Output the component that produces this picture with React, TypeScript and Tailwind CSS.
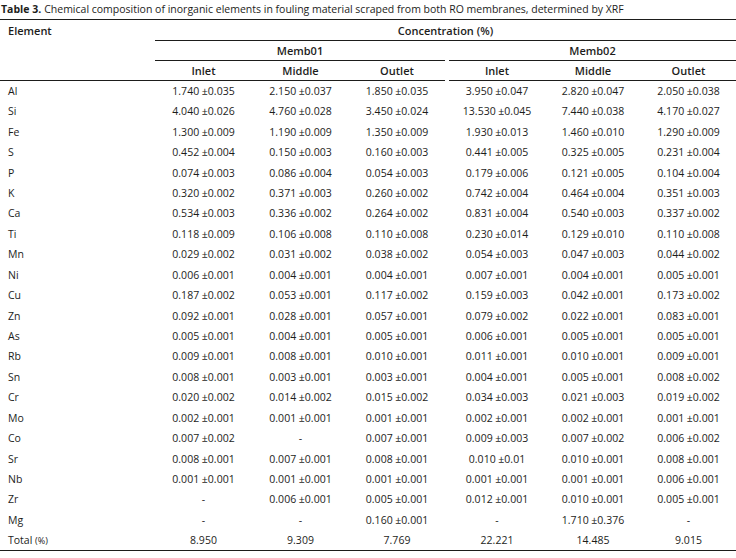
const rows: [string, string[]][] = [
  ['Al', ['1.740 ±0.035', '2.150 ±0.037', '1.850 ±0.035', '3.950 ±0.047', '2.820 ±0.047', '2.050 ±0.038']],
  ['Si', ['4.040 ±0.026', '4.760 ±0.028', '3.450 ±0.024', '13.530 ±0.045', '7.440 ±0.038', '4.170 ±0.027']],
  ['Fe', ['1.300 ±0.009', '1.190 ±0.009', '1.350 ±0.009', '1.930 ±0.013', '1.460 ±0.010', '1.290 ±0.009']],
  ['S', ['0.452 ±0.004', '0.150 ±0.003', '0.160 ±0.003', '0.441 ±0.005', '0.325 ±0.005', '0.231 ±0.004']],
  ['P', ['0.074 ±0.003', '0.086 ±0.004', '0.054 ±0.003', '0.179 ±0.006', '0.121 ±0.005', '0.104 ±0.004']],
  ['K', ['0.320 ±0.002', '0.371 ±0.003', '0.260 ±0.002', '0.742 ±0.004', '0.464 ±0.004', '0.351 ±0.003']],
  ['Ca', ['0.534 ±0.003', '0.336 ±0.002', '0.264 ±0.002', '0.831 ±0.004', '0.540 ±0.003', '0.337 ±0.002']],
  ['Ti', ['0.118 ±0.009', '0.106 ±0.008', '0.110 ±0.008', '0.230 ±0.014', '0.129 ±0.010', '0.110 ±0.008']],
  ['Mn', ['0.029 ±0.002', '0.031 ±0.002', '0.038 ±0.002', '0.054 ±0.003', '0.047 ±0.003', '0.044 ±0.002']],
  ['Ni', ['0.006 ±0.001', '0.004 ±0.001', '0.004 ±0.001', '0.007 ±0.001', '0.004 ±0.001', '0.005 ±0.001']],
  ['Cu', ['0.187 ±0.002', '0.053 ±0.001', '0.117 ±0.002', '0.159 ±0.003', '0.042 ±0.001', '0.173 ±0.002']],
  ['Zn', ['0.092 ±0.001', '0.028 ±0.001', '0.057 ±0.001', '0.079 ±0.002', '0.022 ±0.001', '0.083 ±0.001']],
  ['As', ['0.005 ±0.001', '0.004 ±0.001', '0.005 ±0.001', '0.006 ±0.001', '0.005 ±0.001', '0.005 ±0.001']],
  ['Rb', ['0.009 ±0.001', '0.008 ±0.001', '0.010 ±0.001', '0.011 ±0.001', '0.010 ±0.001', '0.009 ±0.001']],
  ['Sn', ['0.008 ±0.001', '0.003 ±0.001', '0.003 ±0.001', '0.004 ±0.001', '0.005 ±0.001', '0.008 ±0.002']],
  ['Cr', ['0.020 ±0.002', '0.014 ±0.002', '0.015 ±0.002', '0.034 ±0.003', '0.021 ±0.003', '0.019 ±0.002']],
  ['Mo', ['0.002 ±0.001', '0.001 ±0.001', '0.001 ±0.001', '0.002 ±0.001', '0.002 ±0.001', '0.001 ±0.001']],
  ['Co', ['0.007 ±0.002', '-', '0.007 ±0.001', '0.009 ±0.003', '0.007 ±0.002', '0.006 ±0.002']],
  ['Sr', ['0.008 ±0.001', '0.007 ±0.001', '0.008 ±0.001', '0.010 ±0.01', '0.010 ±0.001', '0.008 ±0.001']],
  ['Nb', ['0.001 ±0.001', '0.001 ±0.001', '0.001 ±0.001', '0.001 ±0.001', '0.001 ±0.001', '0.006 ±0.001']],
  ['Zr', ['-', '0.006 ±0.001', '0.005 ±0.001', '0.012 ±0.001', '0.010 ±0.001', '0.005 ±0.001']],
  ['Mg', ['-', '-', '0.160 ±0.001', '-', '1.710 ±0.376', '-']],
];

const totals = ['8.950', '9.309', '7.769', '22.221', '14.485', '9.015'];

// 155 label col, 3 x Memb01, 4px gap col, 3 x Memb02
const cols = 'grid grid-cols-[155px_97px_97px_96px_4px_96px_96px_95px]';

const DataRow = ({ label, values, last }: { label: React.ReactNode; values: string[]; last?: boolean }) => (
  <div className={`${cols} h-[20.43px] items-center ${last ? 'border-b border-[#1d1d1b]' : ''}`}>
    <div className="pl-[8px]">{label}</div>
    {values.slice(0, 3).map((v, i) => (
      <div key={i} className="text-center">{v}</div>
    ))}
    <div />
    {values.slice(3).map((v, i) => (
      <div key={i + 3} className="text-center">{v}</div>
    ))}
  </div>
);

export default function App() {
  return (
    <div
      className="w-[736px] h-[558px] bg-white text-[#1d1d1b] text-[10.5px] leading-none"
      style={{ fontFamily: '"Open Sans", "Noto Sans", sans-serif' }}
    >
      <div className="h-[19px] flex items-center pl-[1px] text-[10.5px]">
        <span className="font-bold mr-[3px]">Table 3.</span>
        Chemical composition of inorganic elements in fouling material scraped from both RO membranes, determined by XRF
      </div>

      <div className={`${cols} grid-rows-[21px_20px_20px] border-t border-[#1d1d1b] font-semibold text-[11px]`}>
        <div className="row-span-3 col-start-1 row-start-1 border-b border-[#1d1d1b] pl-[8px] pt-[5px]">Element</div>
        <div className="col-start-2 col-span-7 row-start-1 border-b border-[#1d1d1b] flex items-center justify-center">
          Concentration (%)
        </div>
        <div className="col-start-2 col-span-3 row-start-2 border-b border-[#1d1d1b] flex items-center justify-center">
          Memb01
        </div>
        <div className="col-start-6 col-span-3 row-start-2 border-b border-[#1d1d1b] flex items-center justify-center">
          Memb02
        </div>
        {['Inlet', 'Middle', 'Outlet'].map((h, i) => (
          <div key={h} className="row-start-3 border-b border-[#1d1d1b] flex items-center justify-center" style={{ gridColumnStart: i + 2 }}>
            {h}
          </div>
        ))}
        {['Inlet', 'Middle', 'Outlet'].map((h, i) => (
          <div key={h + '2'} className="row-start-3 border-b border-[#1d1d1b] flex items-center justify-center" style={{ gridColumnStart: i + 6 }}>
            {h}
          </div>
        ))}
      </div>

      {rows.map(([el, vals]) => (
        <DataRow key={el} label={el} values={vals} />
      ))}
      <DataRow
        label={
          <span>
            Total <span className="text-[9px]">(%)</span>
          </span>
        }
        values={totals}
        last
      />
    </div>
  );
}
